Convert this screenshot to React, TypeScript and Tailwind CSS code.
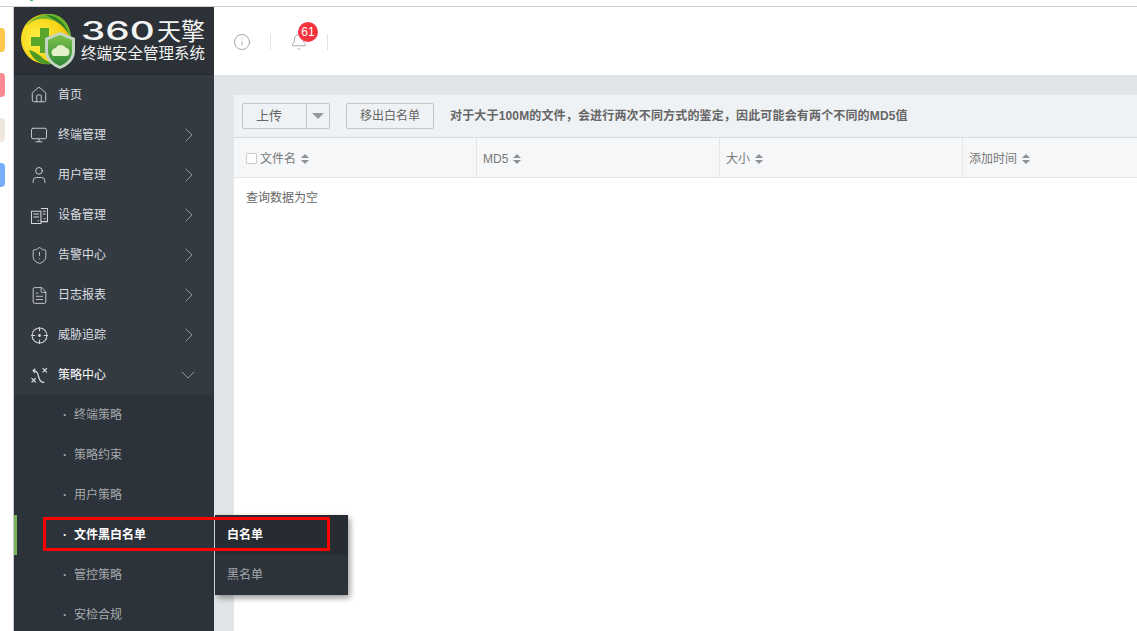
import { ChevronRight, ChevronDown, House, Monitor, User, ShieldAlert, FileText, Info, Bell } from 'lucide-react';

const sans = 'font-["Liberation_Sans","Noto_Sans_CJK_SC",sans-serif]';

function DeviceIcon() {
  return (
    <svg width="17" height="17" viewBox="0 0 18 18" fill="none" stroke="currentColor" strokeWidth="1.100">
      <path d="M.5 4.500h10v13H.5zM10.500 1.500h7v14h-7" />
      <path d="M2.500 7.500h6M2.500 10.500h6M12.500 4.500h3M12.500 7.500h3" />
      <path d="M7 14.500h1.500M13.500 12.500h2" />
    </svg>
  );
}

function TargetIcon() {
  return (
    <svg width="17" height="17" viewBox="0 0 16 16" fill="none" stroke="currentColor" strokeWidth="1">
      <circle cx="8" cy="8" r="7" />
      <path d="M8 0v4M8 12v4M0 8h4M12 8h4" />
      <circle cx="8" cy="8" r=".8" fill="currentColor" />
    </svg>
  );
}

function StrategyIcon() {
  return (
    <svg width="17" height="17" viewBox="0 0 16 16" fill="none" stroke="currentColor" strokeWidth="1.100">
      <path d="M.5 10.500l4 4M4.500 10.500l-4 4M11 1l4 4M15 1l-4 4" />
      <path d="M2.500 3.500c3.500 0 3.500 2 4.500 5s1.500 6 5.500 6" />
      <path d="M4 1.500l-2 2 2 2" />
    </svg>
  );
}

function SortIcon() {
  return (
    <svg width="8" height="10" viewBox="0 0 8 10" className="ml-[5px] mt-[1px] text-[#8d9196]" fill="currentColor">
      <path d="M4 0l4 4H0zM4 10L0 6h8z" />
    </svg>
  );
}

function Logo() {
  return (
    <svg width="58" height="58" viewBox="0 0 58 58">
      <defs>
        <radialGradient id="ball" cx="0.35" cy="0.5" r="0.7">
          <stop offset="0" stopColor="#fff34a" />
          <stop offset="0.7" stopColor="#f7d214" />
          <stop offset="1" stopColor="#d99a0c" />
        </radialGradient>
        <linearGradient id="shield" x1="0" y1="0" x2="0" y2="1">
          <stop offset="0" stopColor="#7cc04a" />
          <stop offset="1" stopColor="#2f8a3a" />
        </linearGradient>
      </defs>
      <circle cx="26" cy="27" r="25" fill="url(#ball)" />
      <path d="M6 14C14 2 34-3 44 8c5 5 7 12 7 19-4-9-10-16-19-19C22 5 13 7 6 14z" fill="#6fb52f" />
      <path d="M26 3c9 0 19 7 23 19-5-8-12-13-23-19z" fill="#2f7d22" />
      <path d="M9 38c5 1 11 5 16 10 3 2 7 3 11 3-10 4-22 0-27-13z" fill="#4c9a24" />
      <path d="M20 16h9v9h8v9h-8v7h-9v-7h-9v-9h9z" fill="#58a62c" />
      <path d="M40 20l15 6v13c0 9-7 15-15 18-8-3-15-9-15-18V26z" fill="#c5d6c4" />
      <path d="M40 23l12 5v11c0 7-5 12-12 15-7-3-12-8-12-15V28z" fill="url(#shield)" />
      <path d="M33 44c-3-3-1-8 3-8 1-4 8-4 10 0 4 0 5 7 1 8z" fill="#e2f1cc" />
    </svg>
  );
}

const menu = [
  { label: '首页', icon: <House size={18} strokeWidth={1.200} />, arrow: false },
  { label: '终端管理', icon: <Monitor size={18} strokeWidth={1.200} />, arrow: true },
  { label: '用户管理', icon: <User size={20} strokeWidth={1.100} />, arrow: true },
  { label: '设备管理', icon: <DeviceIcon />, arrow: true },
  { label: '告警中心', icon: <ShieldAlert size={19} strokeWidth={1.100} />, arrow: true },
  { label: '日志报表', icon: <FileText size={19} strokeWidth={1.100} />, arrow: true },
  { label: '威胁追踪', icon: <TargetIcon />, arrow: true },
];

const subMenu = ['终端策略', '策略约束', '用户策略', '文件黑白名单', '管控策略', '安检合规'];

export default function App() {
  return (
    <div className={`relative h-[631px] w-[1137px] overflow-hidden bg-white ${sans}`}>
      <div className="h-[7px] border-b border-[#d0d0d0] bg-white" />
      <div className="absolute left-[30px] top-0 h-[1px] w-[3px] bg-[#3fc46a]" />
      <div className="flex h-[624px]">
        {/* clipped desktop icons */}
        <div className="flex w-[14px] shrink-0 flex-col gap-[21px] border-r border-[#c8c8c8] pt-[21px]">
          <div className="h-[24px] w-[5px] rounded-r bg-[#fdc94b]" />
          <div className="h-[24px] w-[5px] rounded-r bg-[#fd8a92]" />
          <div className="h-[24px] w-[5px] rounded-r bg-[#efe6dc]" />
          <div className="h-[24px] w-[5px] rounded-r bg-[#77aefa]" />
        </div>

        {/* sidebar */}
        <div className="relative flex w-[200px] shrink-0 flex-col bg-[#333a41]">
          <div className="flex h-[68px] shrink-0 items-center gap-[3px] border-b border-[#262a30] bg-[#2c3138] pl-[6px]">
            <Logo />
            <div className="flex flex-col text-[#f2f3f3]">
              <div className="flex h-[24px] items-center leading-none">
                <span className="inline-block w-[74px] origin-left scale-x-[1.55] font-['Inter'] text-[25px] font-medium whitespace-nowrap">360</span>
                <span className="ml-[2px] text-[24px]">天擎</span>
              </div>
              <div className="mt-[2px] text-[15.500px] leading-[16px] whitespace-nowrap">终端安全管理系统</div>
            </div>
          </div>

          {menu.map((item) => (
            <div key={item.label} className="flex h-[40px] shrink-0 items-center">
              <div className="flex w-[44px] shrink-0 justify-center pl-[6px] text-[#d4d6d8]">{item.icon}</div>
              <span className="text-[12px] text-[#dcdfe1]">{item.label}</span>
              {item.arrow && <ChevronRight size={24} strokeWidth={1} className="ml-auto mr-[13px] text-[#8f9497]" />}
            </div>
          ))}

          <div className="flex h-[40px] shrink-0 items-center">
            <div className="flex w-[44px] shrink-0 justify-center pl-[6px] text-[#e2e4e5]"><StrategyIcon /></div>
            <span className="text-[12px] text-white">策略中心</span>
            <ChevronDown size={24} strokeWidth={1} className="ml-auto mr-[14px] text-[#8f9497]" />
          </div>

          <div className="shrink-0 bg-[#2d333a]">
            {subMenu.map((label, i) => (
              <div key={label} className={i === 3 ? 'flex h-[40px] items-center border-l-[3px] border-[#7ab55c] pl-[46px] text-[12px] font-bold text-white' : 'flex h-[40px] items-center pl-[49px] text-[12px] text-[#a5a9ad]'}>
                <span className="w-[11px] text-[12px] font-bold">·</span>
                {label}
              </div>
            ))}
          </div>

          {/* flyout menu */}
          <div className="absolute left-[201px] top-[508px] z-10 w-[133px] bg-[#2d333a] text-[12px] shadow-[2px_3px_6px_rgba(0,0,0,0.4)]">
            <div className="flex h-[40px] items-center bg-[#272c33] pl-[12px] font-bold text-white">白名单</div>
            <div className="flex h-[40px] items-center pl-[12px] text-[#a5a9ad]">黑名单</div>
          </div>

          {/* red annotation box */}
          <div className="absolute left-[29px] top-[510px] z-20 h-[34px] w-[287px] border-[3px] border-[#fd0000]" />
        </div>

        {/* main */}
        <div className="flex min-w-0 flex-1 flex-col">
          <div className="flex h-[68px] shrink-0 items-center bg-white pl-[19px] text-[#8a8e92]">
            <Info size={18} strokeWidth={1} className="mt-[2px]" />
            <div className="ml-[19px] mt-[2px] h-[16px] w-px bg-[#e4e4e4]" />
            <div className="relative ml-[19px] mt-[2px]">
              <Bell size={18} strokeWidth={1} />
              <span className="absolute left-[8px] top-[-11px] flex h-[20px] w-[20px] items-center justify-center rounded-full bg-[#f5333f] text-[12px] text-white">61</span>
            </div>
            <div className="ml-[19px] mt-[2px] h-[16px] w-px bg-[#e4e4e4]" />
          </div>

          <div className="flex-1 bg-[#e2e5e8] pl-[20px] pt-[20px]">
            <div className="flex h-full flex-col bg-white">
              <div className="flex h-[43px] items-center border-b border-[#d8dadc] bg-[#eff2f5] pl-[8px] text-[12px] text-[#666]">
                <div className="flex h-[26px] w-[88px] items-center rounded-[2px] border border-[#c4c7ca]">
                  <span className="flex-1 pl-[13px] text-[13px]">上传</span>
                  <span className="flex h-full w-[23px] items-center justify-center border-l border-[#c4c7ca]">
                    <span className="h-0 w-0 border-x-[6px] border-t-[6px] border-x-transparent border-t-[#999]" />
                  </span>
                </div>
                <div className="ml-[16px] flex h-[26px] w-[88px] items-center justify-center rounded-[2px] border border-[#c4c7ca]">移出白名单</div>
                <span className="ml-[16px] font-bold tracking-[0.16px]">对于大于100M的文件，会进行两次不同方式的鉴定，因此可能会有两个不同的MD5值</span>
              </div>

              <div className="grid h-[40px] grid-cols-[243px_243px_243px_1fr] border-b border-[#e4e6e8] bg-[#f6f7f9] text-[12px] text-[#777]">
                <div className="flex items-center border-r border-[#e4e6e8] pl-[12px] pt-[2px]">
                  <span className="mr-[3px] h-[11px] w-[11px] rounded-[1px] border border-[#ccc] bg-white" />
                  文件名
                  <SortIcon />
                </div>
                <div className="flex items-center border-r border-[#e4e6e8] pl-[6px] pt-[2px]">MD5<SortIcon /></div>
                <div className="flex items-center border-r border-[#e4e6e8] pl-[6px] pt-[2px]">大小<SortIcon /></div>
                <div className="flex items-center pl-[6px] pt-[2px]">添加时间<SortIcon /></div>
              </div>

              <div className="pl-[12px] pt-[12px] text-[12px] leading-[16px] text-[#666]">查询数据为空</div>
            </div>
          </div>
        </div>
      </div>
    </div>
  );
}
